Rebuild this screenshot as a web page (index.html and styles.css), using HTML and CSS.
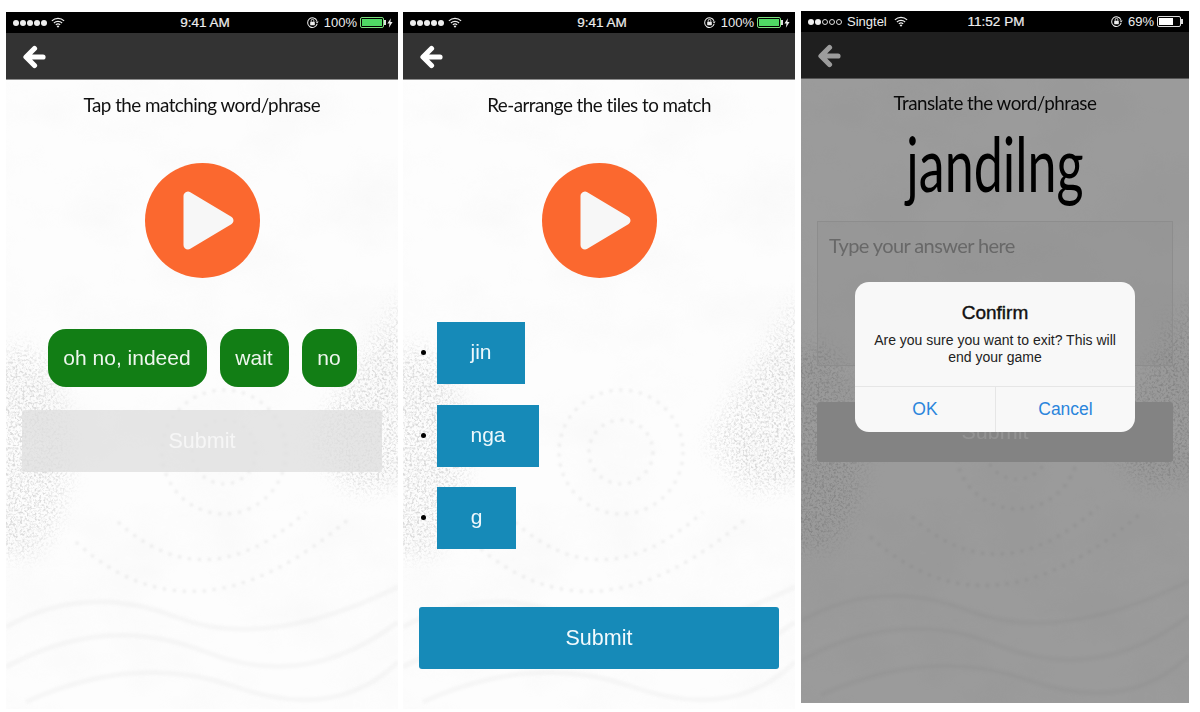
FILE: index.html
```html
<!DOCTYPE html>
<html lang="en">
<head>
<meta charset="utf-8">
<title>Language game screens</title>
<link rel="stylesheet" href="styles.css">
</head>
<body>
<svg class="defs" width="0" height="0" aria-hidden="true">
  <defs>
    <filter id="speckle" x="0" y="0" width="100%" height="100%">
      <feTurbulence type="fractalNoise" baseFrequency="0.42" numOctaves="3" seed="7"/>
      <feColorMatrix type="matrix" values="0 0 0 0 0.7  0 0 0 0 0.7  0 0 0 0 0.7  2.4 2.4 0 0 -2.2"/>
    </filter>
    <filter id="cloud" x="0" y="0" width="100%" height="100%">
      <feTurbulence type="fractalNoise" baseFrequency="0.012 0.018" numOctaves="4" seed="4"/>
      <feColorMatrix type="matrix" values="0 0 0 0 0.7  0 0 0 0 0.7  0 0 0 0 0.7  0.9 0 0 0 -0.36"/>
    </filter>
    <filter id="soft"><feGaussianBlur stdDeviation="11"/></filter>
    <filter id="soft2"><feGaussianBlur stdDeviation="1.2"/></filter>
    <mask id="patches" maskUnits="userSpaceOnUse" x="0" y="0" width="392" height="697">
      <g filter="url(#soft)" fill="#fff">
        <ellipse cx="12" cy="440" rx="50" ry="105"/>
        <path d="M400 280 L335 380 L305 430 L345 480 L400 470 Z"/>
      </g>
    </mask>
    <symbol id="paper" viewBox="0 0 392 697">
      <rect width="392" height="697" fill="#fdfdfd"/>
      <rect width="392" height="697" filter="url(#cloud)" opacity=".22"/>
      <g mask="url(#patches)">
        <rect width="392" height="697" filter="url(#speckle)"/>
      </g>
      <g fill="none" stroke="#c4c4c4" filter="url(#soft2)">
        <g stroke-dasharray="3 7" stroke-width="3" opacity=".28">
          <circle cx="218" cy="440" r="32"/>
          <circle cx="218" cy="440" r="62"/>
          <path d="M112 510 Q200 590 300 500"/>
          <path d="M70 530 Q190 640 345 505"/>
        </g>
        <g stroke-width="5" opacity=".1">
          <path d="M0 615 Q80 570 170 605 T392 575"/>
          <path d="M0 655 Q100 600 200 640 T392 610"/>
          <path d="M20 690 Q130 640 230 675 T392 650"/>
        </g>
      </g>
    </symbol>
    <symbol id="back" viewBox="0 0 24 24">
      <path d="M21 12H5M12.500 3.500 4 12l8.500 8.500" fill="none" stroke="currentColor" stroke-width="5.200" stroke-linecap="round" stroke-linejoin="round"/>
    </symbol>
    <symbol id="wifi" viewBox="0 0 16 12">
      <path d="M1 4.200a10 10 0 0 1 14 0M3.300 6.600a6.800 6.800 0 0 1 9.400 0M5.500 8.800a3.600 3.600 0 0 1 5 0" fill="none" stroke="currentColor" stroke-width="1.300"/>
      <path d="M8 12 6.500 10.200a2.200 2.200 0 0 1 3 0Z" fill="currentColor"/>
    </symbol>
    <symbol id="rotlock" viewBox="0 0 14 14">
      <path d="M11.800 5.200A5.200 5.200 0 1 0 12 8.500" fill="none" stroke="currentColor" stroke-width="1.100"/>
      <path d="M10.200 6h3.400L12 8Z" fill="currentColor"/>
      <rect x="4.500" y="6.200" width="5" height="3.800" rx=".5" fill="currentColor"/>
      <path d="M5.600 6.200V5a1.400 1.400 0 0 1 2.800 0v1.200" fill="none" stroke="currentColor"/>
    </symbol>
    <symbol id="bolt" viewBox="0 0 7 11">
      <path d="M4.500 0 .5 6.200h2.400L2.200 11l4.300-6.600H4Z" fill="currentColor"/>
    </symbol>
    <symbol id="play" viewBox="0 0 115 115">
      <circle cx="57.500" cy="57.500" r="57.500" fill="#fb682f"/>
      <path d="M43 33v49l41-24.500Z" fill="#f7f7f7" stroke="#f7f7f7" stroke-width="9" stroke-linejoin="round"/>
    </symbol>
  </defs>
</svg>

<main class="row">

  <section class="phone">
    <svg class="paper"><use href="#paper"/></svg>
    <header class="status">
      <div class="status-left">
        <span class="dots"><i></i><i></i><i></i><i></i><i></i></span>
        <svg class="wifi"><use href="#wifi"/></svg>
      </div>
      <div class="time time-shift">9:41 AM</div>
      <div class="status-right">
        <svg class="rotlock"><use href="#rotlock"/></svg>
        <span class="pct">100%</span>
        <span class="battery charged"><b></b></span>
        <svg class="bolt"><use href="#bolt"/></svg>
      </div>
    </header>
    <nav class="nav"><svg class="back"><use href="#back"/></svg></nav>
    <div class="content">
      <h1 class="prompt">Tap the matching word/phrase</h1>
      <svg class="play"><use href="#play"/></svg>
      <div class="chips">
        <button class="chip chip-wide">oh no, indeed</button>
        <button class="chip chip-mid">wait</button>
        <button class="chip chip-small">no</button>
      </div>
      <button class="submit submit-off">Submit</button>
    </div>
  </section>

  <section class="phone">
    <svg class="paper"><use href="#paper"/></svg>
    <header class="status">
      <div class="status-left">
        <span class="dots"><i></i><i></i><i></i><i></i><i></i></span>
        <svg class="wifi"><use href="#wifi"/></svg>
      </div>
      <div class="time time-shift">9:41 AM</div>
      <div class="status-right">
        <svg class="rotlock"><use href="#rotlock"/></svg>
        <span class="pct">100%</span>
        <span class="battery charged"><b></b></span>
        <svg class="bolt"><use href="#bolt"/></svg>
      </div>
    </header>
    <nav class="nav"><svg class="back"><use href="#back"/></svg></nav>
    <div class="content">
      <h1 class="prompt">Re-arrange the tiles to match</h1>
      <svg class="play"><use href="#play"/></svg>
      <ul class="tiles">
        <li><span class="tile tile-jin">jin</span></li>
        <li><span class="tile tile-nga">nga</span></li>
        <li><span class="tile tile-g">g</span></li>
      </ul>
      <button class="submit submit-on">Submit</button>
    </div>
  </section>

  <section class="phone phone-alert">
    <svg class="paper"><use href="#paper"/></svg>
    <header class="status status-top">
      <div class="status-left">
        <span class="dots"><i></i><i></i><i class="off"></i><i class="off"></i><i class="off"></i></span>
        <span class="carrier">Singtel</span>
        <svg class="wifi wifi-wide"><use href="#wifi"/></svg>
      </div>
      <div class="time">11:52 PM</div>
      <div class="status-right">
        <svg class="rotlock"><use href="#rotlock"/></svg>
        <span class="pct">69%</span>
        <span class="battery partial"><b></b></span>
      </div>
    </header>
    <nav class="nav"><svg class="back"><use href="#back"/></svg></nav>
    <div class="content content-alert">
      <h1 class="prompt prompt-alert">Translate the word/phrase</h1>
      <div class="word">jandilng</div>
      <div class="answer">Type your answer here</div>
      <button class="submit submit-dim">Submit</button>
    </div>
    <div class="dim"></div>
    <div class="alert" role="dialog">
      <div class="alert-body">
        <h2 class="alert-title">Confirm</h2>
        <p class="alert-text">Are you sure you want to exit? This will end your game</p>
      </div>
      <div class="alert-actions">
        <button class="alert-btn">OK</button>
        <button class="alert-btn">Cancel</button>
      </div>
    </div>
  </section>

</main>
</body>
</html>
```
FILE: styles.css
```css
* { box-sizing: border-box; }

html, body {
  margin: 0;
  height: 712px;
  overflow: hidden;
  background: #fff;
  font-family: "Liberation Sans", Arial, sans-serif;
}

.defs { position: absolute; }

.row {
  display: flex;
  align-items: flex-start;
  gap: 5px;
  padding: 12px 0 0 6px;
}

.phone {
  position: relative;
  flex: none;
  width: 392px;
  height: 697px;
  overflow: hidden;
  background: #fdfdfd;
}

.paper {
  position: absolute;
  inset: 0;
  width: 100%;
  height: 100%;
}

/* status bar */
.status {
  position: relative;
  display: grid;
  grid-template-columns: 1fr auto 1fr;
  align-items: center;
  height: 21px;
  padding: 0 5px 0 7px;
  background: #000;
  color: #eee;
  font-size: 13px;
}

.status-left,
.status-right {
  display: flex;
  align-items: center;
}

.status-right { justify-content: flex-end; }

.dots { display: flex; gap: 1px; }

.dots i {
  width: 6px;
  height: 6px;
  border-radius: 50%;
  background: #eee;
}

.dots i.off {
  background: none;
  border: 1px solid #ddd;
}

.carrier { margin-left: 5px; }

.wifi {
  width: 14px;
  height: 11px;
  margin-left: 4px;
}

.wifi-wide { margin-left: 7px; }

.time {
  font-size: 13.500px;
  font-weight: 400;
  -webkit-text-stroke: .2px #eee;
}

.time-shift { margin-left: 4px; }

.rotlock {
  width: 13px;
  height: 13px;
}

.pct { margin-left: 5px; }

.battery {
  position: relative;
  display: block;
  width: 24px;
  height: 11px;
  margin-left: 3px;
  padding: 1px;
  border: 1px solid #ddd;
  border-radius: 2px;
}

.battery::after {
  content: "";
  position: absolute;
  right: -3px;
  top: 2px;
  width: 2px;
  height: 5px;
  background: #ddd;
}

.battery b { display: block; height: 100%; background: #fff; }
.charged { border-color: #7ee07e; }
.charged b { background: #4fd964; }
.partial { margin-right: 3px; }
.partial b { width: 69%; }

.bolt {
  width: 6px;
  height: 10px;
  margin-left: 3px;
}

/* nav */
.nav {
  position: relative;
  display: flex;
  align-items: center;
  height: 47px;
  padding: 2px 0 0 16px;
  background: #333;
  border-bottom: 1px solid #8d8d8d;
  color: #fff;
}

.back { width: 24px; height: 24px; }

/* content */
.content {
  position: relative;
  display: flex;
  flex-direction: column;
  align-items: center;
}

.prompt {
  margin: 12px 0 0;
  font-family: Lato, "Liberation Sans", sans-serif;
  font-size: 20px;
  line-height: 24px;
  letter-spacing: -.55px;
  font-weight: 400;
  color: #111;
  transform: scaleX(.94);
}

.play {
  display: block;
  width: 115px;
  height: 115px;
  margin-top: 47px;
}

.chips {
  display: flex;
  gap: 13px;
  margin-top: 51px;
}

.chip {
  height: 58px;
  border: 0;
  padding: 0;
  border-radius: 18px;
  background: #127e15;
  color: #eef6ee;
  font: 21px "Liberation Sans", sans-serif;
}

.chip-wide { width: 159px; }
.chip-mid { width: 69px; }
.chip-small { width: 55px; }

.submit {
  display: block;
  width: 360px;
  height: 62px;
  border: 0;
  padding: 0;
  border-radius: 3px;
  font: 21.500px "Liberation Sans", sans-serif;
}

.submit-off {
  margin-top: 23px;
  background: rgba(222, 222, 222, .75);
  color: #f6f6f6;
}

.submit-on {
  margin-top: 58px;
  background: #168ab8;
  color: #f2fafd;
}

.tiles {
  align-self: stretch;
  margin: 44px 0 0;
  padding: 0 0 0 34px;
  font-size: 16px;
  color: #000;
}

.tiles li + li { margin-top: 20.500px; }

.tile {
  display: inline-block;
  height: 62px;
  line-height: 60px;
  text-align: center;
  background: #168ab8;
  color: #eef8fc;
  font-size: 21px;
  vertical-align: middle;
}

.tile-jin { width: 88px; }
.tile-nga { width: 102px; }
.tile-g { width: 79px; }

/* third screen */
.phone-alert {
  width: 388px;
  height: 692px;
  margin: -1px 0 0 1px;
}

.status-top { z-index: 3; }

.content-alert { padding: 0 16px; }

.prompt-alert { margin-top: 11px; }

.word {
  margin-top: 17px;
  height: 90px;
  font-family: Lato, "Liberation Sans", sans-serif;
  font-size: 52px;
  line-height: 72px;
  color: #000;
  transform: scaleY(1.46);
  transform-origin: 50% 50%;
}

.answer {
  align-self: stretch;
  height: 145px;
  margin-top: 0;
  padding: 9px 11px;
  border: 1px solid #e6e6e6;
  background: rgba(0, 0, 0, .03);
  font-family: Lato, "Liberation Sans", sans-serif;
  font-size: 20px;
  line-height: 28px;
  letter-spacing: -.6px;
  color: #aaa;
}

.submit-dim {
  width: 100%;
  height: 60px;
  margin-top: 36px;
  background: #d6d6d6;
  color: #f0f0f0;
}

.dim {
  position: absolute;
  inset: 0;
  z-index: 1;
  background: rgba(0, 0, 0, .39);
}

.alert {
  position: absolute;
  z-index: 2;
  left: 54px;
  top: 271px;
  width: 280px;
  height: 150px;
  display: flex;
  flex-direction: column;
  border-radius: 14px;
  background: #f8f8f8;
}

.alert-body {
  flex: 1;
  padding: 20px 14px 0;
  text-align: center;
}

.alert-title {
  margin: 0;
  font-size: 19px;
  line-height: 22px;
  font-weight: 400;
  -webkit-text-stroke: .4px #111;
  color: #111;
}

.alert-text {
  margin: 8px 0 0;
  font-size: 14px;
  line-height: 17px;
  color: #222;
}

.alert-actions {
  display: grid;
  grid-template-columns: 140px 140px;
  height: 46px;
  border-top: 1px solid #e6e6e6;
}

.alert-btn {
  border: 0;
  padding: 0;
  background: none;
  font: 17.500px "Liberation Sans", sans-serif;
  color: #2a85dc;
}

.alert-btn + .alert-btn { border-left: 1px solid #e6e6e6; }
```
